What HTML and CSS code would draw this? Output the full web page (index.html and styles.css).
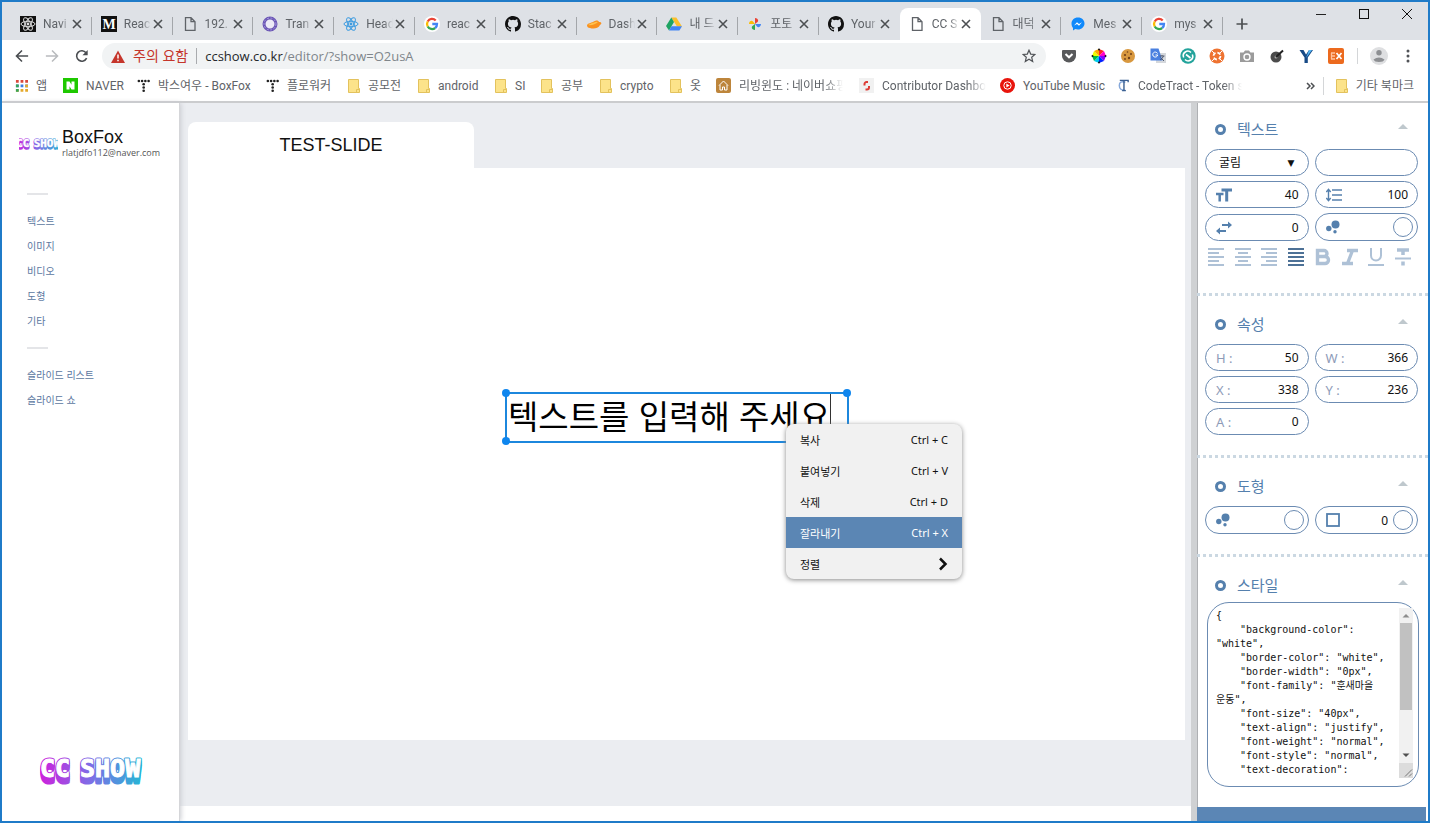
FILE: index.html
```html
<!DOCTYPE html>
<html lang="ko">
<head>
<meta charset="utf-8">
<title>CC SHOW</title>
<link rel="stylesheet" href="styles.css">
</head>
<body>
<svg class="defs" aria-hidden="true">
  <defs>
    <linearGradient id="brand" gradientUnits="userSpaceOnUse" x1="0" y1="0" x2="106" y2="0">
      <stop offset="0" stop-color="#cf1fdc"/><stop offset=".5" stop-color="#7d6fe6"/><stop offset="1" stop-color="#22b9d4"/>
    </linearGradient>
    <text id="wordmark" class="wordmark" y="22"><tspan x="2">CC</tspan><tspan x="42">SHOW</tspan></text>
  </defs>
  <symbol id="logo" viewBox="0 0 106 32" preserveAspectRatio="xMidYMid slice">
    <g fill="url(#brand)" stroke="url(#brand)" stroke-width="3" stroke-linejoin="round">
      <use href="#wordmark" y="6"/><use href="#wordmark" y="4"/><use href="#wordmark" y="2"/><use href="#wordmark"/>
    </g>
    <use href="#wordmark" fill="#fff" stroke="#fff" stroke-width="1"/>
  </symbol>
  <symbol id="x" viewBox="0 0 10 10"><path d="M1 1l8 8M9 1l-8 8" stroke="#4c4f52" stroke-width="1.6"/></symbol>
  <symbol id="atom" viewBox="0 0 16 16"><g fill="none" stroke="currentColor"><ellipse cx="8" cy="8" rx="7" ry="2.7"/><ellipse cx="8" cy="8" rx="7" ry="2.7" transform="rotate(60 8 8)"/><ellipse cx="8" cy="8" rx="7" ry="2.7" transform="rotate(120 8 8)"/></g><circle cx="8" cy="8" r="1.4" fill="currentColor"/></symbol>
  <symbol id="page" viewBox="0 0 16 16"><path d="M3.500 1.700h5.500l4 4v8.600h-9.500zM9 1.700v4h4" fill="none" stroke="#5f6368" stroke-width="1.300"/></symbol>
  <symbol id="google" viewBox="0 0 16 16"><circle cx="8" cy="8" r="8" fill="#fff"/><g fill="none" stroke-width="2.300"><path d="M11.700 4.500A5 5 0 0 0 3.700 5.500" stroke="#ea4335"/><path d="M3.700 5.500a5 5 0 0 0 0 5" stroke="#fbbc05"/><path d="M3.700 10.500a5 5 0 0 0 7.500 1.500" stroke="#34a853"/><path d="M11.200 12A5 5 0 0 0 13 8H8.300" stroke="#4285f4"/></g></symbol>
  <symbol id="github" viewBox="0 0 16 16"><path fill="#111" d="M8 0C3.580 0 0 3.580 0 8c0 3.540 2.290 6.530 5.470 7.590.4.070.55-.17.55-.38 0-.19-.01-.82-.01-1.490-2.010.37-2.530-.49-2.690-.94-.09-.23-.48-.94-.82-1.130-.28-.15-.68-.52-.01-.53.63-.01 1.080.58 1.230.82.72 1.210 1.870.87 2.330.66.07-.52.28-.87.51-1.070-1.780-.2-3.640-.89-3.640-3.950 0-.87.31-1.590.82-2.150-.08-.2-.36-1.020.08-2.120 0 0 .67-.21 2.200.82a7.600 7.600 0 0 1 4 0c1.530-1.040 2.200-.82 2.200-.82.44 1.100.16 1.920.08 2.120.51.56.82 1.270.82 2.150 0 3.070-1.870 3.750-3.650 3.950.29.25.54.73.54 1.480 0 1.070-.01 1.930-.01 2.200 0 .21.15.46.55.38A8 8 0 0 0 16 8c0-4.420-3.580-8-8-8z"/></symbol>
  <symbol id="dots" viewBox="0 0 14 14"><g fill="#222"><circle cx="2" cy="2.200" r="1.400"/><circle cx="5.500" cy="2.200" r="1.400"/><circle cx="9" cy="2.200" r="1.400"/><circle cx="12.500" cy="2.200" r="1.400"/><circle cx="7.200" cy="5.700" r="1.400"/><circle cx="7.200" cy="9.200" r="1.400"/><circle cx="7.200" cy="12.600" r="1.400"/></g></symbol>
  <symbol id="folder" viewBox="0 0 12 14"><path d="M.5.5h10v9h1v4H.5z" fill="#fce38a" stroke="#e3c25d"/><path d="M8.500 13.500v-3h3" fill="none" stroke="#e3c25d"/></symbol>
  <symbol id="bubbles" viewBox="0 0 14 14"><g fill="currentColor"><circle cx="9.500" cy="4.500" r="4"/><circle cx="2.800" cy="8.500" r="2.700"/><circle cx="9" cy="11.800" r="1.700"/></g></symbol>
</svg>

<div class="window">
  <header class="chrome">
    <div class="strip">
      <ul class="tabs">
        <li class="tab"><svg class="fav" color="#ddd"><rect width="16" height="16" fill="#111"/><use href="#atom"/></svg><span class="ttl">Navi</span><button class="close" aria-label="닫기"><svg><use href="#x"/></svg></button></li>
        <li class="tab"><svg class="fav" viewBox="0 0 16 16"><rect width="16" height="16" fill="#111"/><text class="med" x="8" y="13" text-anchor="middle" fill="#fff">M</text></svg><span class="ttl">Reac</span><button class="close" aria-label="닫기"><svg><use href="#x"/></svg></button></li>
        <li class="tab"><svg class="fav"><use href="#page"/></svg><span class="ttl">192.</span><button class="close" aria-label="닫기"><svg><use href="#x"/></svg></button></li>
        <li class="tab"><svg class="fav" viewBox="0 0 16 16"><circle cx="8" cy="8" r="6" fill="#eceaf6" stroke="#6a55b4" stroke-width="3"/><circle cx="8" cy="8" r="6" fill="none" stroke="#a79be0" stroke-dasharray="2 1.500"/></svg><span class="ttl">Tran</span><button class="close" aria-label="닫기"><svg><use href="#x"/></svg></button></li>
        <li class="tab"><svg class="fav" color="#3d9be0"><use href="#atom"/></svg><span class="ttl">Head</span><button class="close" aria-label="닫기"><svg><use href="#x"/></svg></button></li>
        <li class="tab"><svg class="fav"><use href="#google"/></svg><span class="ttl">reac</span><button class="close" aria-label="닫기"><svg><use href="#x"/></svg></button></li>
        <li class="tab"><svg class="fav"><use href="#github"/></svg><span class="ttl">Stac</span><button class="close" aria-label="닫기"><svg><use href="#x"/></svg></button></li>
        <li class="tab"><svg class="fav" viewBox="0 0 16 16"><path d="M1 9c1-2 4-2 6-3 3-2 5-2 6 0 3 0 3 2 1 3-2 4-7 4-10 3-2 0-3-1-3-3z" fill="#f9911f"/><path d="M2 9c3 1 8-1 10-3-3-1-4 1-6 1z" fill="#ffc24d"/></svg><span class="ttl">Dash</span><button class="close" aria-label="닫기"><svg><use href="#x"/></svg></button></li>
        <li class="tab"><svg class="fav" viewBox="0 0 16 16"><path d="M5.300 1.500h5L16 10.500h-5z" fill="#fbc02d"/><path d="M5.300 1.500l2.700 4.500L3 14.500 0 10z" fill="#1fa463"/><path d="M5.500 10.300H16l-2.600 4.200H3z" fill="#4285f4"/></svg><span class="ttl">내 드</span><button class="close" aria-label="닫기"><svg><use href="#x"/></svg></button></li>
        <li class="tab"><svg class="fav" viewBox="0 0 16 16"><path d="M8 8V2c3 0 4 3 2.500 4z" fill="#ea4335"/><path d="M8 8h6c0 3-3 4-4 2.500z" fill="#4285f4"/><path d="M8 8v6c-3 0-4-3-2.500-4z" fill="#34a853"/><path d="M8 8H2c0-3 3-4 4-2.500z" fill="#fbbc05"/></svg><span class="ttl">포토</span><button class="close" aria-label="닫기"><svg><use href="#x"/></svg></button></li>
        <li class="tab"><svg class="fav"><use href="#github"/></svg><span class="ttl">Your</span><button class="close" aria-label="닫기"><svg><use href="#x"/></svg></button></li>
        <li class="tab active"><svg class="fav"><use href="#page"/></svg><span class="ttl">CC S</span><button class="close" aria-label="닫기"><svg><use href="#x"/></svg></button></li>
        <li class="tab"><svg class="fav"><use href="#page"/></svg><span class="ttl">대덕</span><button class="close" aria-label="닫기"><svg><use href="#x"/></svg></button></li>
        <li class="tab"><svg class="fav" viewBox="0 0 16 16"><path d="M8 1.500c4 0 6.500 2.700 6.500 6s-3 6-6.500 6c-1 0-2-.2-2.700-.5L3 14.500V12C2 10.800 1.500 9.300 1.500 7.500c0-3.300 2.500-6 6.500-6z" fill="#1089fb"/><path d="M4 9.500l3-3.200 2 1.700 3-1.800-3 3.500-2-1.700z" fill="#fff"/></svg><span class="ttl">Mes</span><button class="close" aria-label="닫기"><svg><use href="#x"/></svg></button></li>
        <li class="tab"><svg class="fav"><use href="#google"/></svg><span class="ttl">mys</span><button class="close" aria-label="닫기"><svg><use href="#x"/></svg></button></li>
      </ul>
      <button class="newtab" aria-label="새 탭"><svg viewBox="0 0 12 12"><path d="M6 .5v11M.5 6h11" stroke="#4c4f52" stroke-width="1.700"/></svg></button>
      <div class="wincontrols">
        <button aria-label="최소화"><svg viewBox="0 0 10 10"><path d="M0 5.500h10" stroke="#222"/></svg></button>
        <button aria-label="최대화"><svg viewBox="0 0 10 10"><rect x=".5" y=".5" width="9" height="9" fill="none" stroke="#111"/></svg></button>
        <button aria-label="창 닫기"><svg viewBox="0 0 10 10"><path d="M0 0l10 10M10 0L0 10" stroke="#111"/></svg></button>
      </div>
    </div>

    <div class="toolbar">
      <div class="nav">
        <button aria-label="뒤로"><svg viewBox="0 0 16 16"><path d="M15 8H2M8 1.700L1.700 8 8 14.300" fill="none" stroke="#4a4d51" stroke-width="1.800"/></svg></button>
        <button aria-label="앞으로"><svg viewBox="0 0 16 16"><path d="M1 8h13M8 1.700L14.300 8 8 14.300" fill="none" stroke="#b9bbbe" stroke-width="1.800"/></svg></button>
        <button aria-label="새로고침"><svg viewBox="0 0 16 16"><path d="M13.300 10.500A6 6 0 1 1 12.600 4.200" fill="none" stroke="#4a4d51" stroke-width="1.800"/><path d="M14.500 1v6h-6z" fill="#4a4d51"/></svg></button>
      </div>
      <div class="omnibox">
        <svg class="warn" viewBox="0 0 14 13"><path d="M7 .5L14 13H0z" fill="#c5352b"/><path d="M7 4.500v4M7 9.700v1.600" stroke="#fff" stroke-width="1.500"/></svg>
        <span class="unsafe">주의 요함</span>
        <span class="url"><b>ccshow.co.kr</b>/editor/?show=O2usA</span>
        <button class="star" aria-label="북마크"><svg viewBox="0 0 14 14"><path d="M7 1.200l1.700 3.900 4.200.4-3.200 2.800 1 4.200L7 10.300l-3.700 2.200 1-4.200L1.100 5.500l4.200-.4z" fill="none" stroke="#505357" stroke-width="1.200"/></svg></button>
      </div>
      <div class="exts">
        <svg viewBox="0 0 16 16"><path d="M1 3q0-1 1-1h12q1 0 1 1v5a7 6.500 0 0 1-14 0z" fill="#58595b"/><path d="M4.500 6L8 9.300 11.500 6" fill="none" stroke="#fff" stroke-width="2"/></svg>
        <svg viewBox="0 0 16 16"><path d="M8 8V1l5 2z" fill="#f22"/><path d="M8 8l5-5 2 5z" fill="#f0c"/><path d="M8 8h7l-2 5z" fill="#80f"/><path d="M8 8l5 5-5 2z" fill="#02f"/><path d="M8 8v7l-5-2z" fill="#0ce"/><path d="M8 8l-5 5-2-5z" fill="#0b4"/><path d="M8 8H1l2-5z" fill="#ef0"/><path d="M8 8L3 3l5-2z" fill="#fa0"/><g fill="#111"><circle cx="8" cy="1.500" r="1"/><circle cx="14.500" cy="8" r="1"/><circle cx="8" cy="14.500" r="1"/><circle cx="1.500" cy="8" r="1"/></g></svg>
        <svg viewBox="0 0 16 16"><circle cx="8" cy="8" r="7" fill="#d8983f"/><g fill="#70401a"><circle cx="5" cy="7" r="1.100"/><circle cx="9" cy="10" r="1.200"/><circle cx="11" cy="6" r="1"/><circle cx="7.500" cy="4" r=".8"/><circle cx="5" cy="11" r=".9"/></g></svg>
        <svg viewBox="0 0 16 16"><rect x="6" y="5" width="10" height="10" fill="#d5d8dc"/><path d="M.5.5h8l4 12H.5z" fill="#4a80e0"/><path d="M7.500 5.500A2.500 2.500 0 1 0 7.700 7H5.500" fill="none" stroke="#fff"/><path d="M9.500 8h5M12 7v1M13.500 8q-1 3-3.500 4M10.500 9.500l3.500 3.500" stroke="#505a70" fill="none"/></svg>
        <svg viewBox="0 0 16 16"><circle cx="8" cy="8" r="7.700" fill="#23a39b"/><path d="M3.700 9.500a4.500 4.500 0 0 1 7.300-5M12.300 6.500a4.500 4.500 0 0 1-7.300 5M6 6.500l4.500 3.500" fill="none" stroke="#fff" stroke-width="1.600"/></svg>
        <svg viewBox="0 0 16 16"><circle cx="8" cy="8" r="7.500" fill="#ee7331"/><circle cx="8" cy="8" r="3.500" fill="none" stroke="#fff" stroke-width="1.800" stroke-dasharray="3.500 2"/><path d="M3 3l3 3M13 3l-3 3M3 13l3-3M13 13l-3-3" stroke="#fff"/></svg>
        <svg viewBox="0 0 16 16"><path d="M1 4.500h3.500L6 2.500h4l1.500 2H15v9.500H1z" fill="#9b9b9b"/><circle cx="8" cy="9" r="3" fill="none" stroke="#fff" stroke-width="1.400"/></svg>
        <svg viewBox="0 0 16 16"><circle cx="7" cy="9" r="5.500" fill="#4b4b4b"/><circle cx="7" cy="9" r="1.500" fill="#aaa"/><path d="M7 9l7-6.500" stroke="#222" stroke-width="2"/></svg>
        <svg viewBox="0 0 16 16"><path d="M1.500 2h4L8 6.500 11 2h4L9.800 9.500V15H6.500V9.500z" fill="#174a86"/><path d="M11 2h3L8 10z" fill="#56b7f4"/></svg>
        <svg viewBox="0 0 16 16"><rect width="16" height="16" rx="2" fill="#ec6a1e"/><path d="M3 5h4M3 8h4M3 11h4M3.500 5v6" stroke="#ffc39d" stroke-width="1.300"/><path d="M8.500 5l5 6M13.500 5l-5 6" stroke="#fff" stroke-width="1.700"/></svg>
      </div>
      <button class="profile" aria-label="프로필"><svg viewBox="0 0 18 18"><circle cx="9" cy="9" r="9" fill="#dedfe1"/><circle cx="9" cy="5.800" r="2.700" fill="#8d8f92"/><path d="M3.500 12.500q5.500-4 11 0-1 2.500-5.500 2.500t-5.500-2.500z" fill="#8d8f92"/></svg></button>
      <button class="more" aria-label="메뉴"><svg viewBox="0 0 4 14"><g fill="#505357"><circle cx="2" cy="2" r="1.500"/><circle cx="2" cy="7" r="1.500"/><circle cx="2" cy="12" r="1.500"/></g></svg></button>
    </div>

    <nav class="bookmarks">
      <div class="marks">
        <a href="#"><svg class="i14" viewBox="0 0 14 14"><g stroke-width="3" stroke-dasharray="3 2"><path d="M1 2.500h13" stroke="#d9483b"/><path d="M1 7.500h13" stroke="#3f7de0"/><path d="M1 12.300h13" stroke="#e5a92b"/></g><path d="M1 7.500h3M1 12.300h3" stroke="#38a457" stroke-width="3"/><path d="M11 7.500h3" stroke="#e5a92b" stroke-width="3"/></svg><span>앱</span></a>
        <a href="#"><svg viewBox="0 0 15 15"><rect width="15" height="15" fill="#1ec800"/><path d="M3.500 3.500h3l2 3.200V3.500h3v8h-3l-2-3.200v3.200h-3z" fill="#fff"/></svg><span>NAVER</span></a>
        <a href="#"><svg class="i14"><use href="#dots"/></svg><span>박스여우 - BoxFox</span></a>
        <a href="#"><svg class="i14"><use href="#dots"/></svg><span>플로워커</span></a>
        <a href="#"><svg class="fold"><use href="#folder"/></svg><span>공모전</span></a>
        <a href="#"><svg class="fold"><use href="#folder"/></svg><span>android</span></a>
        <a href="#"><svg class="fold"><use href="#folder"/></svg><span>SI</span></a>
        <a href="#"><svg class="fold"><use href="#folder"/></svg><span>공부</span></a>
        <a href="#"><svg class="fold"><use href="#folder"/></svg><span>crypto</span></a>
        <a href="#"><svg class="fold"><use href="#folder"/></svg><span>옷</span></a>
        <a href="#"><svg viewBox="0 0 15 15"><rect width="15" height="15" rx="2" fill="#bd853b"/><path d="M3 7.500L7.500 3 12 7.500M4 7v5h2.500V9h2v3H11V7" fill="none" stroke="#fff"/></svg><span class="fade">리빙윈도 : 네이버쇼핑</span></a>
        <a href="#"><svg viewBox="0 0 15 15"><rect width="15" height="15" fill="#f1f1f1"/><path d="M9 4H7.500a2 2 0 0 0-2 2v1.500M6.500 11.500h1.500a2 2 0 0 0 2-2V8" fill="none" stroke="#dd3b35" stroke-width="2"/></svg><span class="fade">Contributor Dashboa</span></a>
        <a href="#"><svg viewBox="0 0 15 15"><circle cx="7.500" cy="7.500" r="7.500" fill="#e8140c"/><circle cx="7.500" cy="7.500" r="3.700" fill="none" stroke="#fff"/><path d="M6.300 5.500l3.400 2-3.400 2z" fill="#fff"/></svg><span>YouTube Music</span></a>
        <a href="#"><svg class="i14" viewBox="0 0 14 14"><path d="M9 3.500Q2.500 1.500 2.500 7T9 12" fill="none" stroke="#86a8da" stroke-width="1.600"/><path d="M3 1.500h9v2M7.500 1.500v11M5.500 12.500h4" fill="none" stroke="#3a5f92" stroke-width="1.500"/></svg><span class="fade">CodeTract - Token st</span></a>
      </div>
      <button class="overflow" aria-label="북마크 더보기"><svg viewBox="0 0 9 8"><path d="M1 1l3 3-3 3M5 1l3 3-3 3" fill="none" stroke="#4c4f52" stroke-width="1.500"/></svg></button>
      <a class="other" href="#"><svg class="fold"><use href="#folder"/></svg><span>기타 북마크</span></a>
    </nav>
  </header>

  <div class="app">
    <aside class="sidebar">
      <div class="user">
        <svg class="avatar" aria-hidden="true"><use href="#logo"/></svg>
        <div><div class="name">BoxFox</div><div class="mail">rlatjdfo112@naver.com</div></div>
      </div>
      <nav class="menu">
        <hr>
        <a href="#">텍스트</a><a href="#">이미지</a><a href="#">비디오</a><a href="#">도형</a><a href="#">기타</a>
        <hr>
        <a href="#">슬라이드 리스트</a><a href="#">슬라이드 쇼</a>
      </nav>
      <svg class="brand" role="img" aria-label="CC SHOW"><use href="#logo"/></svg>
    </aside>

    <main class="work">
      <section class="stage">
        <h1 class="slidetab">TEST-SLIDE</h1>
        <div class="canvas">
          <div class="textbox"><span class="content">텍스트를 입력해 주세요</span><i class="h tl"></i><i class="h tr"></i><i class="h bl"></i></div>
          <div class="ctx" role="menu">
            <button role="menuitem"><span>복사</span><span>Ctrl + C</span></button>
            <button role="menuitem"><span>붙여넣기</span><span>Ctrl + V</span></button>
            <button role="menuitem"><span>삭제</span><span>Ctrl + D</span></button>
            <button role="menuitem" class="on"><span>잘라내기</span><span>Ctrl + X</span></button>
            <button role="menuitem"><span>정렬</span><svg viewBox="0 0 10 14"><path d="M2 1.500L7.500 7 2 12.500" fill="none" stroke="#111" stroke-width="2.500"/></svg></button>
          </div>
        </div>
      </section>
    </main>

    <aside class="panel">
      <section class="sec">
        <h2>텍스트</h2>
        <div class="grid">
          <label class="pill sel"><select aria-label="글꼴"><option>굴림</option></select><span class="arrow">▼</span></label>
          <label class="pill"><input type="text" aria-label="글꼴 이름"></label>
          <label class="pill"><svg viewBox="0 0 16 14"><path d="M5.500 2H16M10.700 2v11.500" stroke="currentColor" stroke-width="3"/><path d="M0 6h7.500M3.700 6v7.500" stroke="currentColor" stroke-width="2.500"/></svg><input type="text" aria-label="크기" value="40"></label>
          <label class="pill"><svg viewBox="0 0 16 14"><path d="M6 2h10M6 7h10M6 12h10" stroke="currentColor" stroke-width="1.700"/><path d="M2.500 1.500v11M.3 4l2.200-2.700L4.700 4M.3 10l2.200 2.700L4.700 10" fill="none" stroke="currentColor" stroke-width="1.400"/></svg><input type="text" aria-label="줄 간격" value="100"></label>
          <label class="pill low"><svg viewBox="0 0 16 14"><path d="M6 4h8M10 10H2" stroke="currentColor" stroke-width="1.800"/><path d="M12 .5L16 4l-4 3.500zM4 6.500L0 10l4 3.500z" fill="currentColor"/></svg><input type="text" aria-label="자간" value="0"></label>
          <div class="pill tall"><svg class="bub"><use href="#bubbles"/></svg><button class="swatch" aria-label="글자 색"></button></div>
        </div>
        <div class="fmt">
          <button aria-label="왼쪽"><svg viewBox="0 0 16 18"><path d="M0 1h16M0 5h11M0 9h16M0 13h11M0 17h16"/></svg></button>
          <button aria-label="가운데"><svg viewBox="0 0 16 18"><path d="M0 1h16M3 5h10M0 9h16M3 13h10M0 17h16"/></svg></button>
          <button aria-label="오른쪽"><svg viewBox="0 0 16 18"><path d="M0 1h16M5 5h11M0 9h16M5 13h11M0 17h16"/></svg></button>
          <button class="chosen" aria-label="양쪽"><svg viewBox="0 0 16 18"><path d="M0 1h16M0 5h16M0 9h16M0 13h16M0 17h16"/></svg></button>
          <button aria-label="굵게"><svg viewBox="0 0 16 18"><path d="M2.500 2.500H9a3 3 0 0 1 0 6H2.500zM2.500 8.500H10a3.300 3.300 0 0 1 0 7H2.500z" stroke-width="3.400"/></svg></button>
          <button aria-label="기울임"><svg viewBox="0 0 16 18"><path d="M5 2.500h11M0 15.500h11M10.500 2.500l-5 13" stroke-width="3.300"/></svg></button>
          <button aria-label="밑줄"><svg viewBox="0 0 16 18"><path d="M3 0v7.500a5 5 0 0 0 10 0V0M0 17h16"/></svg></button>
          <button aria-label="취소선"><svg viewBox="0 0 16 18"><path d="M2 2h12M8 2v5M8 13.500v4" stroke-width="3.500"/><path d="M0 10.500h16"/></svg></button>
        </div>
      </section>
      <section class="sec">
        <h2>속성</h2>
        <div class="grid">
          <label class="pill"><span>H :</span><input type="text" value="50"></label>
          <label class="pill"><span>W :</span><input type="text" value="366"></label>
          <label class="pill"><span>X :</span><input type="text" value="338"></label>
          <label class="pill"><span>Y :</span><input type="text" value="236"></label>
          <label class="pill"><span>A :</span><input type="text" value="0"></label>
        </div>
      </section>
      <section class="sec">
        <h2>도형</h2>
        <div class="grid">
          <div class="pill tall"><svg class="bub"><use href="#bubbles"/></svg><button class="swatch" aria-label="채우기 색"></button></div>
          <div class="pill tall"><svg class="bub" viewBox="0 0 14 14"><rect x="1" y="1" width="12" height="12" fill="none" stroke="currentColor" stroke-width="1.800"/></svg><input type="text" aria-label="테두리 두께" value="0"><button class="swatch" aria-label="테두리 색"></button></div>
        </div>
      </section>
      <section class="sec last">
        <h2>스타일</h2>
        <div class="code">
          <textarea aria-label="스타일" spellcheck="false">{
    "background-color":
"white",
    "border-color": "white",
    "border-width": "0px",
    "font-family": "훈새마을
운동",
    "font-size": "40px",
    "text-align": "justify",
    "font-weight": "normal",
    "font-style": "normal",
    "text-decoration":</textarea>
          <div class="bar" aria-hidden="true">
            <svg viewBox="0 0 14 15"><path d="M3.500 9.500L7 6l3.500 3.500z" fill="#8d8d8d"/></svg>
            <div class="thumb"></div>
            <svg viewBox="0 0 14 15"><path d="M3.500 5.500L7 9l3.500-3.500z" fill="#505050"/></svg>
            <svg class="grip" viewBox="0 0 14 15"><path d="M6 13.500l7-7M10 13.500l3-3" stroke="#777"/></svg>
          </div>
        </div>
      </section>
      <div class="foot"></div>
    </aside>
  </div>
</div>
</body>
</html>
```
FILE: styles.css
```css
*, *::before { box-sizing: border-box; }
body { margin: 0; font-family: "Noto Sans", "Noto Sans CJK KR", sans-serif; font-size: 12px; color: #111; }
button { border: 0; padding: 0; background: none; font: inherit; color: inherit; display: flex; align-items: center; justify-content: center; }
a { color: inherit; text-decoration: none; }
svg { display: block; flex: none; }
input, select, textarea { font: inherit; color: inherit; border: 0; padding: 0; background: none; outline: 0; min-width: 0; }
.defs { position: absolute; width: 0; height: 0; }
.wordmark { font: bold 25px "DejaVu Sans Mono", monospace; }
.med { font: bold 14px "Liberation Serif", serif; }

.window { height: 100vh; display: flex; flex-direction: column; border: 2px solid #1f7bc8; overflow: hidden; background: #fff; }

.chrome { flex: none; border-bottom: 2px solid #cbccce; font-family: "Open Sans", "Noto Sans CJK KR", sans-serif; }
.strip { display: flex; height: 38px; background: #dee1e6; padding-left: 9px; }
.tabs { list-style: none; margin: 0; padding: 6px 0 0; display: flex; flex: 0 1 1212px; min-width: 0; }
.tab { flex: 1 1 0; min-width: 0; display: flex; align-items: center; padding: 0 10px 0 9px; position: relative; }
.tab::after { content: ""; position: absolute; right: 0; top: 9px; height: 18px; border-right: 1px solid #a3a6aa; }
.tab.active { background: #fff; border-radius: 8px 8px 0 0; }
.tab.active::after, .tab:has(+ .active)::after { display: none; }
.fav { width: 16px; height: 16px; }
.ttl { flex: 1; margin: 0 2px 0 7px; overflow: hidden; white-space: nowrap; font: 12px/18px Roboto, "Noto Sans CJK KR", sans-serif; color: #5f6368; -webkit-mask-image: linear-gradient(90deg, #000 65%, transparent); mask-image: linear-gradient(90deg, #000 65%, transparent); }
.close svg { width: 10px; height: 10px; }
.newtab { width: 36px; height: 44px; margin-left: 1px; }
.newtab svg { width: 12px; height: 12px; }
.wincontrols { margin-left: auto; display: flex; height: 24px; }
.wincontrols button { width: 43px; }
.wincontrols svg { width: 10px; height: 10px; }

.toolbar { display: flex; align-items: center; height: 32px; }
.nav { display: flex; padding-left: 5px; width: 100px; flex: none; }
.nav button { width: 30px; }
.nav svg { width: 14px; height: 14px; }
.omnibox { flex: 1; height: 26px; border-radius: 13px; background: #f1f3f4; display: flex; align-items: center; padding: 0 10px 0 9px; font-size: 13px; white-space: nowrap; }
.warn { width: 14px; height: 13px; }
.unsafe { margin-left: 8px; padding-right: 8px; border-right: 1px solid #a9abae; line-height: 16px; font-size: 14px; color: #c5352b; }
.url { margin-left: 8px; color: #80868b; }
.url b { font-weight: 400; color: #25282b; }
.star { margin-left: auto; }
.star svg { width: 14px; height: 14px; }
.exts { display: flex; justify-content: space-between; width: 298px; padding-left: 15px; }
.exts svg { width: 16px; height: 16px; }
.profile { margin-left: 13px; padding-left: 12px; border-left: 1px solid #d4d6d8; height: 16px; }
.profile svg { width: 18px; height: 18px; }
.more { width: 40px; }
.more svg { width: 4px; height: 14px; }

.bookmarks { display: flex; align-items: center; height: 29px; color: #5f6368; padding: 0 14px 2px 13px; white-space: nowrap; font-family: Roboto, "Noto Sans CJK KR", sans-serif; }
.marks { flex: 1; min-width: 0; display: grid; overflow: hidden; grid-template-columns: 48px 74px 129px 82px 70px 77px 46px 59px 70px 46px 143px 141px 117px 1fr; }
.bookmarks a { display: flex; align-items: center; gap: 8px; min-width: 0; line-height: 18px; }
.marks svg { width: 15px; height: 15px; }
.marks .i14 { width: 13px; height: 13px; }
.bookmarks .fold { width: 12px; height: 14px; }
.fade { overflow: hidden; width: 104px; -webkit-mask-image: linear-gradient(90deg, #000 82%, transparent); mask-image: linear-gradient(90deg, #000 82%, transparent); }
.overflow svg { width: 9px; height: 8px; }
.other { margin-left: 8px; padding-left: 12px; border-left: 1px solid #d4d6d8; }

.app { flex: 1; display: flex; min-height: 0; }
.sidebar { width: 178px; flex: none; display: flex; flex-direction: column; border-right: 1px solid #d5d6d9; box-shadow: 1px 0 5px #c9cbd0; z-index: 1; padding: 23px 0 34px; background: #fff; }
.user { display: flex; align-items: center; gap: 4px; padding-left: 17px; }
.avatar { width: 39px; height: 14px; margin-top: 4px; }
.name { font: 18px/22px "Liberation Sans", sans-serif; }
.mail { font: 9px/10px "Open Sans", sans-serif; color: #555; }
.menu { padding: 35px 25px 0; display: flex; flex-direction: column; color: #5b779f; font-size: 10px; line-height: 25px; }
.menu hr { width: 21px; height: 2px; border: 0; margin: 0 0 14px; background: #e4e5e8; }
.menu a + hr { margin-top: 13px; }
.brand { width: 106px; height: 32px; margin: auto 0 0 36px; }

.work { flex: 1; min-width: 0; display: flex; flex-direction: column; }
.stage { flex: 1; margin-bottom: 15px; padding: 19px 6px 66px 8px; background: #ebedf1; display: flex; flex-direction: column; }
.slidetab { margin: 0; width: 286px; border-radius: 8px 8px 0 0; background: #fff; text-align: center; font: 18px/46px "Liberation Sans", sans-serif; }
.canvas { flex: 1; background: #fff; position: relative; }
.textbox { position: absolute; left: 317px; top: 224px; width: 344px; height: 51px; border: 2px solid #1c87dd; padding-left: 1px; }
.content { display: inline-block; border-right: 1px solid #333; line-height: 42px; font-size: 33px; font-weight: 400; color: #000; white-space: nowrap; font-family: "Noto Sans CJK KR", sans-serif; }
.h { position: absolute; width: 8px; height: 8px; border-radius: 50%; background: #0f86ee; }
.tl { left: -5px; top: -5px; }
.tr { right: -4px; top: -5px; }
.bl { left: -5px; bottom: -4px; }
.ctx { position: absolute; left: 598px; top: 256px; width: 176px; border-radius: 8px; overflow: hidden; background: #f1f1f1; box-shadow: 0 1px 5px #888; font-size: 11px; }
.ctx button { width: 100%; height: 31px; padding: 0 14px; justify-content: space-between; }
.ctx svg { width: 10px; height: 14px; }
.ctx .on { background: #5b86b4; color: #fff; }

.panel { width: 237px; flex: none; border-left: 6px solid #cfd1d3; box-shadow: inset 1px 0 #aeb0b3; display: flex; flex-direction: column; color: #5580ad; }
.sec { padding: 18px 8px 20px; border-bottom: 3px dotted #cbd8e2; }
.sec:first-child { padding: 16px 8px 27px; }
.sec:first-child .grid { row-gap: 5px; }
.last { border: 0; }
.sec h2 { display: flex; align-items: center; margin: 0 0 10px; padding: 0 12px 0 10px; font-size: 15px; line-height: 20px; font-weight: 400; }
.sec h2::before { content: ""; width: 11px; height: 11px; margin-right: 11px; border: 3px solid #5580ad; border-radius: 50%; }
.sec h2::after { content: ""; margin: -6px 0 0 auto; border: solid transparent; border-width: 0 5px 5px; border-bottom-color: #bfc8cd; }
.grid { display: grid; grid-template-columns: 1fr 1fr; gap: 5px 6px; padding-right: 2px; }
.pill { height: 27px; border: 1px solid #6b8bb2; border-radius: 14px; display: flex; align-items: center; padding: 0 9px 0 10px; }
.pill svg { width: 16px; height: 14px; }
.pill .bub { width: 14px; height: 14px; }
.pill span { flex: none; font-size: 13px; color: #8e9bb8; }
.pill input { flex: 1; width: 20px; text-align: right; color: #111; font-size: 12px; }
.tall { height: 28px; padding-right: 4px; justify-content: space-between; }
.tall input { padding-right: 5px; }
.low { align-self: end; }
.swatch { width: 20px; height: 20px; border: 1px solid #6b8bb2; border-radius: 50%; background: #fff; }
.pill select { appearance: none; flex: 1; color: #111; padding-left: 3px; }
.pill .arrow { color: #111; font: 9px "DejaVu Sans", sans-serif; padding-right: 4px; }
.fmt { display: flex; justify-content: space-between; padding: 7px 9px 0 3px; }
.fmt svg { width: 16px; height: 18px; fill: none; stroke: #aec1d6; stroke-width: 2; }
.fmt .chosen svg { stroke: #4d7196; }
.last h2 { margin-bottom: 7px; }
.code { display: flex; height: 185px; margin: 0 1px 0 2px; border: 1px solid #6b8bb2; border-radius: 22px; padding: 5px 5px 8px 8px; }
.code textarea { flex: 1; resize: none; overflow: hidden; white-space: pre; color: #111; font: 10px/14px "DejaVu Sans Mono", "Noto Sans CJK KR", monospace; padding-top: 1px; }
.bar { width: 14px; display: flex; flex-direction: column; background: #f1f1f1; }
.bar svg { width: 14px; height: 15px; }
.thumb { height: 87px; margin: 0 1px auto; background: #c1c1c1; }
.bar .grip { background: #dcdcdc; }
.foot { flex: none; height: 15px; margin: auto 2px 0 0; background: #5b86b5; }
```
